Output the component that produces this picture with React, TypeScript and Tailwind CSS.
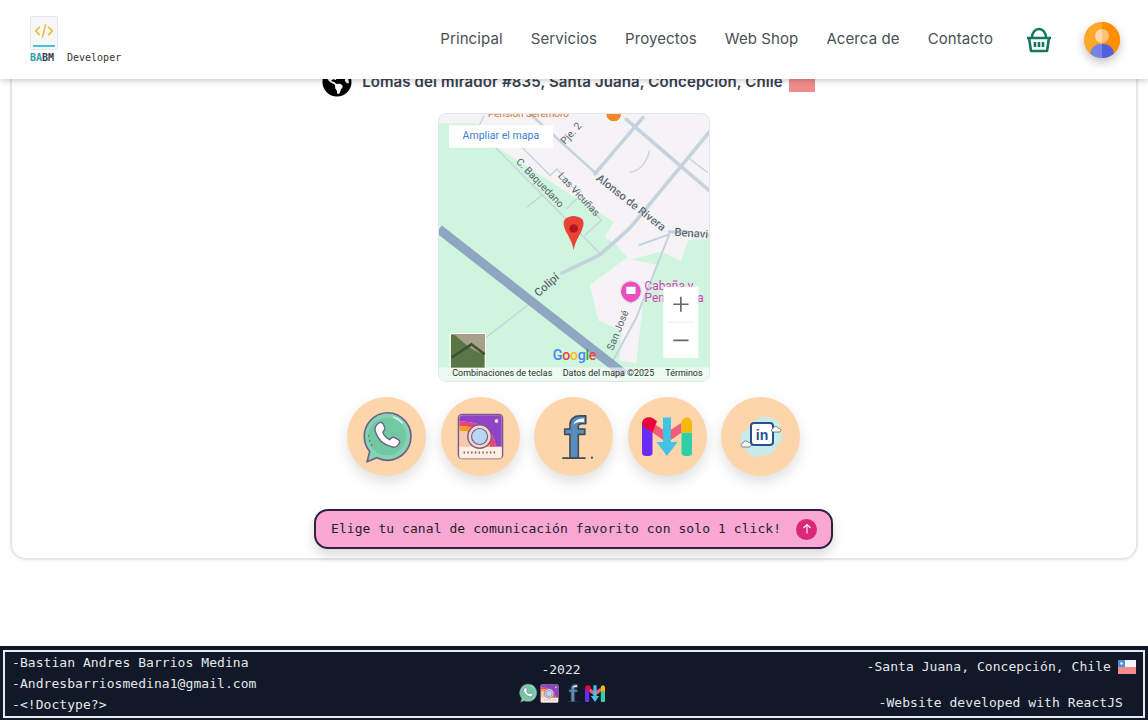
import { FaGlobeAmericas } from 'react-icons/fa';

const mono = "font-['DejaVu_Sans_Mono','Liberation_Mono',monospace]";
const navLinks = ['Principal', 'Servicios', 'Proyectos', 'Web Shop', 'Acerca de', 'Contacto'];

function WhatsappIcon({ className }: { className?: string }) {
  return (
    <svg viewBox="0 0 100 100" className={className}>
      <path d="M50 5a44 44 0 1 1-19 83.5L13 96l5-19A44 44 0 0 1 50 5z" fill="#84d3b2" stroke="#6f5f88" strokeWidth="3" strokeLinejoin="round" />
      <circle cx="50" cy="49" r="35" fill="#73c8a4" />
      <path d="M35 24c3-2 6-1 8 2l3 7c1 2 0 4-2 6l-2 2c2 6 7 11 13 14l3-3c2-2 4-2 6-1l7 4c3 2 3 5 1 8-3 5-8 7-14 5-15-4-26-15-30-29-1-6 2-12 7-15z" fill="#fff" stroke="#6f5f88" strokeWidth="2.5" strokeLinejoin="round" />
      <path d="M16 48v.1M18 57v.1M22 65v.1" stroke="#6f5f88" strokeWidth="3" strokeLinecap="round" />
      <path d="M62 13c6 2 12 6 16 11" stroke="#fff" strokeWidth="2" fill="none" strokeLinecap="round" />
    </svg>
  );
}

function InstagramIcon({ className }: { className?: string }) {
  return (
    <svg viewBox="0 0 100 100" className={className}>
      <rect x="3" y="3" width="94" height="94" rx="8" fill="#f8c9a8" stroke="#7a5a96" strokeWidth="3" />
      <path d="M5 12c0-4 3-7 7-7h78c3 0 5 2 5 5v62H82C82 40 55 18 5 18z" fill="#8e44c4" />
      <path d="M5 18c50 0 77 22 77 54h13v2H70C70 45 48 28 5 28z" fill="#e8457f" />
      <path d="M5 28c43 0 65 17 65 46h-14C56 52 38 38 5 38z" fill="#fb9a1c" />
      <path d="M5 72h90v20c0 3-2 5-5 5H10c-3 0-5-2-5-5z" fill="#fdeede" />
      <path d="M14 84h72" stroke="#6f5f88" strokeWidth="4" strokeDasharray="3 5" />
      <circle cx="48" cy="50" r="25" fill="#f6d7c6" stroke="#7a5a96" strokeWidth="3" />
      <circle cx="48" cy="50" r="17" fill="#b6d8f2" stroke="#7a5a96" strokeWidth="2.5" />
      <circle cx="84" cy="17" r="5" fill="#f3d8ee" stroke="#7a5a96" strokeWidth="2" />
    </svg>
  );
}

function FacebookIcon({ className }: { className?: string }) {
  return (
    <svg viewBox="0 0 100 100" className={className}>
      <path d="M34 98V44H22V32h12V22C34 9 44 2 56 2h14v18H60c-5 0-7 2-7 6v6h15v12H53v54z" fill="#5a8dbb" stroke="#3f4a5a" strokeWidth="3.5" strokeLinejoin="round" />
      <path d="M42 22c2-8 10-14 24-14v8H56c-6 0-10 2-14 6z" fill="#fff" />
      <path d="M18 98h50" stroke="#3f4a5a" strokeWidth="4" strokeLinecap="round" />
      <circle cx="84" cy="97" r="2.5" fill="#3f4a5a" />
    </svg>
  );
}

function GmailIcon({ className }: { className?: string }) {
  return (
    <svg viewBox="0 0 100 100" preserveAspectRatio="none" className={className}>
      <path d="M0 20h21v72c0 4-3 8-8 8H8c-5 0-8-4-8-8z" fill="#6a2cf5" />
      <path d="M79 40h21v52c0 4-3 8-8 8h-5c-5 0-8-4-8-8z" fill="#2fd0a8" />
      <path d="M21 15l29 24 29-24v25L50 66 21 40z" fill="#f25c78" />
      <path d="M0 18C0 0 16-3 24 5l6 6-9 29L0 22z" fill="#e8063c" />
      <path d="M79 40V12l3-6c8-10 18-4 18 12v22z" fill="#f5b90c" />
      <path d="M42 1h16v63h13L50 100 29 64h13z" fill="#43c2e4" />
    </svg>
  );
}

function LinkedinIcon({ className }: { className?: string }) {
  return (
    <svg viewBox="0 0 100 100" className={className}>
      <path d="M10 55c-4-12 8-20 18-22 6-18 24-28 38-22 14 0 24 12 24 28 6 10 2 22-8 28-4 16-18 22-30 20-12 6-28 2-32-12-6-2-9-8-10-20z" fill="#c9ece8" />
      <rect x="30" y="22" width="44" height="44" rx="6" fill="#fff" stroke="#27508f" strokeWidth="4" />
      <text x="52" y="56" textAnchor="middle" fontFamily="'Liberation Sans', sans-serif" fontWeight="700" fontSize="28" fill="#27508f">in</text>
      <path d="M74 40c-4 0-4-6 0-7 1-5 9-5 11 0 6-1 7 7 1 7z" fill="#fff" stroke="#555" strokeWidth="1.5" />
      <path d="M14 70c-5 0-5-7 0-8 2-5 9-5 11-1 6-1 7 9 1 9z" fill="#fff" stroke="#555" strokeWidth="1.5" />
    </svg>
  );
}

function MapEmbed() {
  return (
    <svg viewBox="24 24 816 807" className="block h-full w-full">
      <rect x="24" y="24" width="816" height="807" fill="#cff5de" />
      <path d="M24 24H840V400L778 405 755 468 695 440 600 465 560 420 525 395 552 350 160 100 140 52H24z" fill="#f5f3f5" />
      <path d="M480 540l110-80 90 20-40 120-20 178-50-10 5-90-70-30z" fill="#f5f3f5" />
      <g fill="none" stroke="#c6d3de" strokeLinecap="round">
        <path d="M395 505l115-55 90-80 240-290" strokeWidth="11" />
        <path d="M590 40l250 215" strokeWidth="11" />
        <path d="M495 205L640 35" strokeWidth="11" />
        <path d="M300 25l200 180" strokeWidth="8" />
        <path d="M160 30L140 70l370 375" strokeWidth="4" />
        <path d="M250 100l110 110 20-20M290 305l45-35M410 310l30-30M380 190l135 155-50 45" strokeWidth="4" />
        <path d="M630 420l90-32M720 388L620 640 550 770" strokeWidth="6" />
        <path d="M165 700l130-100" strokeWidth="4" />
        <path d="M660 135c-8 35-28 60-58 65M775 155l60 45" strokeWidth="4" />
        <path d="M720 380l55 0" strokeWidth="10" />
      </g>
      <path d="M24 372l560 438" stroke="#8ea6c2" strokeWidth="28" fill="none" />
      <g fontFamily="'Roboto', 'Liberation Sans', sans-serif" fontSize="31" fill="#5b6670">
        <text transform="translate(255 170) rotate(46)">C. Baquedano</text>
        <text transform="translate(382 212) rotate(47)">Las Vicuñas</text>
        <text transform="translate(405 118) rotate(-48)">Pje. 2</text>
        <text transform="translate(550 740) rotate(-68)">San José</text>
      </g>
      <g fontFamily="'Roboto', 'Liberation Sans', sans-serif" fontSize="34" fontWeight="500" fill="#44505c" stroke="#fff" strokeWidth="0.4">
        <text transform="translate(497 222) rotate(38)">Alonso de Rivera</text>
        <text transform="translate(735 392) rotate(4)">Benavid</text>
        <text transform="translate(325 578) rotate(-42)">Colipí</text>
      </g>
      <text x="172" y="33" fontFamily="'Roboto', sans-serif" fontSize="30" fill="#d9701f">Pensión Seremoro</text>
      <circle cx="552" cy="24" r="24" fill="#f08a2c" stroke="#fff" strokeWidth="3" />
      <g fontFamily="'Roboto', 'Liberation Sans', sans-serif" fontSize="36" fill="#d63fb8">
        <text x="645" y="555">Cabaña y</text>
        <text x="645" y="592">Pensión Sa</text>
      </g>
      <path d="M604 596c-18-4-32-18-32-36a32 32 0 1 1 64 0c0 18-14 32-32 36z" fill="#e94fc0" stroke="#e6e2e6" strokeWidth="4" />
      <rect x="590" y="546" width="28" height="22" rx="2" fill="#fff" />
      <path d="M411 385c-16-30-15-50 20-53 35 3 36 23 20 53-8 15-16 28-20 50-4-22-12-35-20-50z" fill="#ea4335" />
      <circle cx="431" cy="370" r="13" fill="#b3151d" />
      <rect x="54" y="58" width="315" height="68" fill="#fff" />
      <text x="95" y="100" fontFamily="'Roboto', sans-serif" fontSize="32" fill="#3b7fd6">Ampliar el mapa</text>
      <rect x="702" y="546" width="106" height="216" fill="#fff" />
      <path d="M732 599h46M755 576v46M732 708h46" stroke="#666" strokeWidth="5" />
      <path d="M716 653h78" stroke="#e6e6e6" strokeWidth="2" />
      <rect x="56" y="686" width="110" height="110" fill="#fff" />
      <rect x="60" y="690" width="102" height="102" fill="#5c7546" />
      <path d="M70 690h92v60c-30-5-60-30-92-60z" fill="#a9a08c" />
      <path d="M62 760l60-40 40 30" stroke="#37542f" strokeWidth="8" fill="none" />
      <text x="368" y="769" fontFamily="'Roboto', 'Liberation Sans', sans-serif" fontSize="43" fontWeight="500" letterSpacing="-1">
        <tspan fill="#4285f4">G</tspan><tspan fill="#ea4335">o</tspan><tspan fill="#fbbc05">o</tspan><tspan fill="#4285f4">g</tspan><tspan fill="#34a853">l</tspan><tspan fill="#ea4335">e</tspan>
      </text>
      <rect x="24" y="790" width="816" height="41" fill="#fff" fillOpacity="0.6" />
      <g fontFamily="'Roboto', 'Liberation Sans', sans-serif" fontSize="27" fill="#2b2b2b">
        <text x="64" y="816">Combinaciones de teclas</text>
        <text x="398" y="816">Datos del mapa ©2025</text>
        <text x="708" y="816">Términos</text>
      </g>
    </svg>
  );
}

function ChileFlag({ className }: { className?: string }) {
  return (
    <svg viewBox="0 0 18 14" className={className}>
      <rect width="18" height="7" fill="#f2f4f8" />
      <rect y="7" width="18" height="7" fill="#f28b8b" />
      <rect width="7" height="7" fill="#4f8fdc" />
      <circle cx="3.5" cy="3.5" r="1.2" fill="#fff" />
    </svg>
  );
}

export default function App() {
  return (
    <div className="flex h-[720px] w-full flex-col overflow-hidden bg-white">
      {/* Top navbar, the card slides under it */}
      <header className="relative z-10 flex h-[79px] shrink-0 items-center justify-between bg-white pl-[30px] pr-[28px] shadow-[0_2px_6px_rgba(0,0,0,0.2)]">
        <div className="flex flex-col">
          <div className="flex h-[34px] w-[28px] flex-col items-center rounded-[2px] border border-gray-200 bg-[#f5f8f9]">
            <svg viewBox="0 0 24 24" className="mt-[4px] h-[20px] w-[20px]" fill="none" stroke="#f0b840" strokeWidth="2">
              <path d="M7 7l-5 5 5 5M17 7l5 5-5 5M14 4l-4 16" />
            </svg>
            <div className="mt-[4px] h-[2px] w-[22px] bg-[#4fc0d8]" />
          </div>
          <div className={`${mono} mt-[1px] flex items-center text-[10px] leading-[13px]`}>
            <span className="w-[37px] font-bold text-[#374151]">
              <span className="text-[#2a9db0]">BA</span>BM
            </span>
            <span className="text-[#333]">Developer</span>
          </div>
        </div>
        <nav className="flex items-center font-['Inter',sans-serif] text-[15px] tracking-[0.1px] text-[#4b4f56]">
          <div className="flex items-center gap-[28px]">
            {navLinks.map((link) => (
              <a key={link} className="whitespace-nowrap">
                {link}
              </a>
            ))}
          </div>
          <svg viewBox="0 0 28 28" className="ml-[32px] h-[28px] w-[28px]" fill="none" stroke="#0f7a5c" strokeWidth="2.6" strokeLinejoin="round">
            <path d="M7 12c0-12 14-12 14 0" />
            <path d="M2 12h24M4 12l2 13h16l2-13" />
            <path d="M10 16v5M14 16v5M18 16v5" />
          </svg>
          <div className="relative ml-[31px] h-[36px] w-[36px] overflow-hidden rounded-full bg-[#ffa726] shadow-[0_4px_10px_rgba(0,0,0,0.25)]">
            <div className="absolute inset-y-0 right-0 w-1/2 bg-[#ff8f00]" />
            <div className="absolute left-[11px] top-[7px] h-[14px] w-[14px] rounded-full bg-[linear-gradient(90deg,#fdd9ab_50%,#fcc27a_50%)]" />
            <div className="absolute left-[6px] top-[22px] h-[20px] w-[24px] rounded-t-[10px] bg-[linear-gradient(90deg,#7584e0_50%,#5060e0_50%)]" />
          </div>
        </nav>
      </header>

      <main className="min-h-0 flex-1 px-[10px]">
        <section className="-mt-[13px] flex h-[494px] flex-col items-center rounded-b-[16px] border-2 border-t-0 border-[#e5e7eb] shadow-[0_1px_3px_rgba(0,0,0,0.05)]">
          <div className="mr-[11px] flex h-[32px] items-center gap-[10px]">
            <FaGlobeAmericas className="h-[30px] w-[30px] text-black" />
            <span className="whitespace-nowrap font-['Inter',sans-serif] text-[15px] font-semibold tracking-[0.12px] text-[#374151]">
              Lomas del mirador #835, Santa Juana, Concepción, Chile
            </span>
            <svg viewBox="0 0 26 20" className="-ml-[4px] h-[20px] w-[26px]">
              <rect width="26" height="20" fill="#f4f5f7" />
              <rect y="7" width="26" height="13" fill="#f28b8b" stroke="#d98" strokeWidth="0.5" />
            </svg>
          </div>
          <div className="mt-[15px] h-[269px] w-[272px] overflow-hidden rounded-[8px] border border-[#e5e7eb]">
            <MapEmbed />
          </div>
          <div className="mr-[1px] mt-[15px] flex gap-[14.5px]">
            <a className="flex h-[79px] w-[79px] items-center justify-center rounded-full bg-[#fdd5aa] shadow-[0_6px_14px_rgba(0,0,0,0.13)]">
              <WhatsappIcon className="h-[54px] w-[54px]" />
            </a>
            <a className="flex h-[79px] w-[79px] items-center justify-center rounded-full bg-[#fdd5aa] shadow-[0_6px_14px_rgba(0,0,0,0.13)]">
              <InstagramIcon className="h-[47px] w-[47px]" />
            </a>
            <a className="flex h-[79px] w-[79px] items-center justify-center rounded-full bg-[#fdd5aa] shadow-[0_6px_14px_rgba(0,0,0,0.13)]">
              <FacebookIcon className="ml-[7px] h-[44px] w-[44px]" />
            </a>
            <a className="flex h-[79px] w-[79px] items-center justify-center rounded-full bg-[#fdd5aa] shadow-[0_6px_14px_rgba(0,0,0,0.13)]">
              <GmailIcon className="h-[39px] w-[50px]" />
            </a>
            <a className="flex h-[79px] w-[79px] items-center justify-center rounded-full bg-[#fdd5aa] shadow-[0_6px_14px_rgba(0,0,0,0.13)]">
              <LinkedinIcon className="h-[50px] w-[50px]" />
            </a>
          </div>
          <div className="mr-[1px] mt-[33px] flex h-[40px] w-[519px] items-center justify-between rounded-[14px] border-2 border-[#2f2145] bg-[#f9a8d4] pl-[15px] pr-[14px] shadow-[0_6px_12px_rgba(0,0,0,0.15)]">
            <span className={`${mono} whitespace-nowrap text-[13px] tracking-[0.07px] text-[#1f1f2b]`}>
              Elige tu canal de comunicación favorito con solo 1 click!
            </span>
            <span className="flex h-[21px] w-[21px] items-center justify-center rounded-full bg-[#db2777]">
              <svg viewBox="0 0 12 12" className="h-[12px] w-[12px]" fill="none" stroke="#fff" strokeWidth="1.1">
                <path d="M6 10.5V1.5M2.5 5L6 1.5 9.5 5" />
              </svg>
            </span>
          </div>
        </section>
      </main>

      <footer className={`${mono} h-[74px] shrink-0 bg-[#111827] px-[3px] pb-[2px] pt-[4px] text-[13px] text-[#e5e7eb]`}>
        <div className="flex h-full items-stretch justify-between border-2 border-[#e8eaee] pl-[7px] pr-[7px]">
          <div className="flex w-[274px] flex-col justify-between pb-[1px] leading-[21px] tracking-[0.06px]">
            <span>-Bastian Andres Barrios Medina</span>
            <span>-Andresbarriosmedina1@gmail.com</span>
            <span>-&lt;!Doctype?&gt;</span>
          </div>
          <div className="flex flex-col items-center pt-[8px] leading-[20px]">
            <span>-2022</span>
            <div className="mt-[3px] flex items-center gap-[2px]">
              <WhatsappIcon className="h-[20px] w-[20px]" />
              <InstagramIcon className="h-[19px] w-[19px]" />
              <FacebookIcon className="ml-[4px] h-[18px] w-[18px]" />
              <GmailIcon className="h-[17px] w-[20px]" />
            </div>
          </div>
          <div className="flex w-[300px] flex-col items-end pt-[4px] leading-[21px] tracking-[0.06px]">
            <span className="flex items-center gap-[7px]">
              -Santa Juana, Concepción, Chile
              <ChileFlag className="h-[14px] w-[18px]" />
            </span>
            <span className="mr-[13px] mt-[15px]">-Website developed with ReactJS</span>
          </div>
        </div>
      </footer>
    </div>
  );
}
